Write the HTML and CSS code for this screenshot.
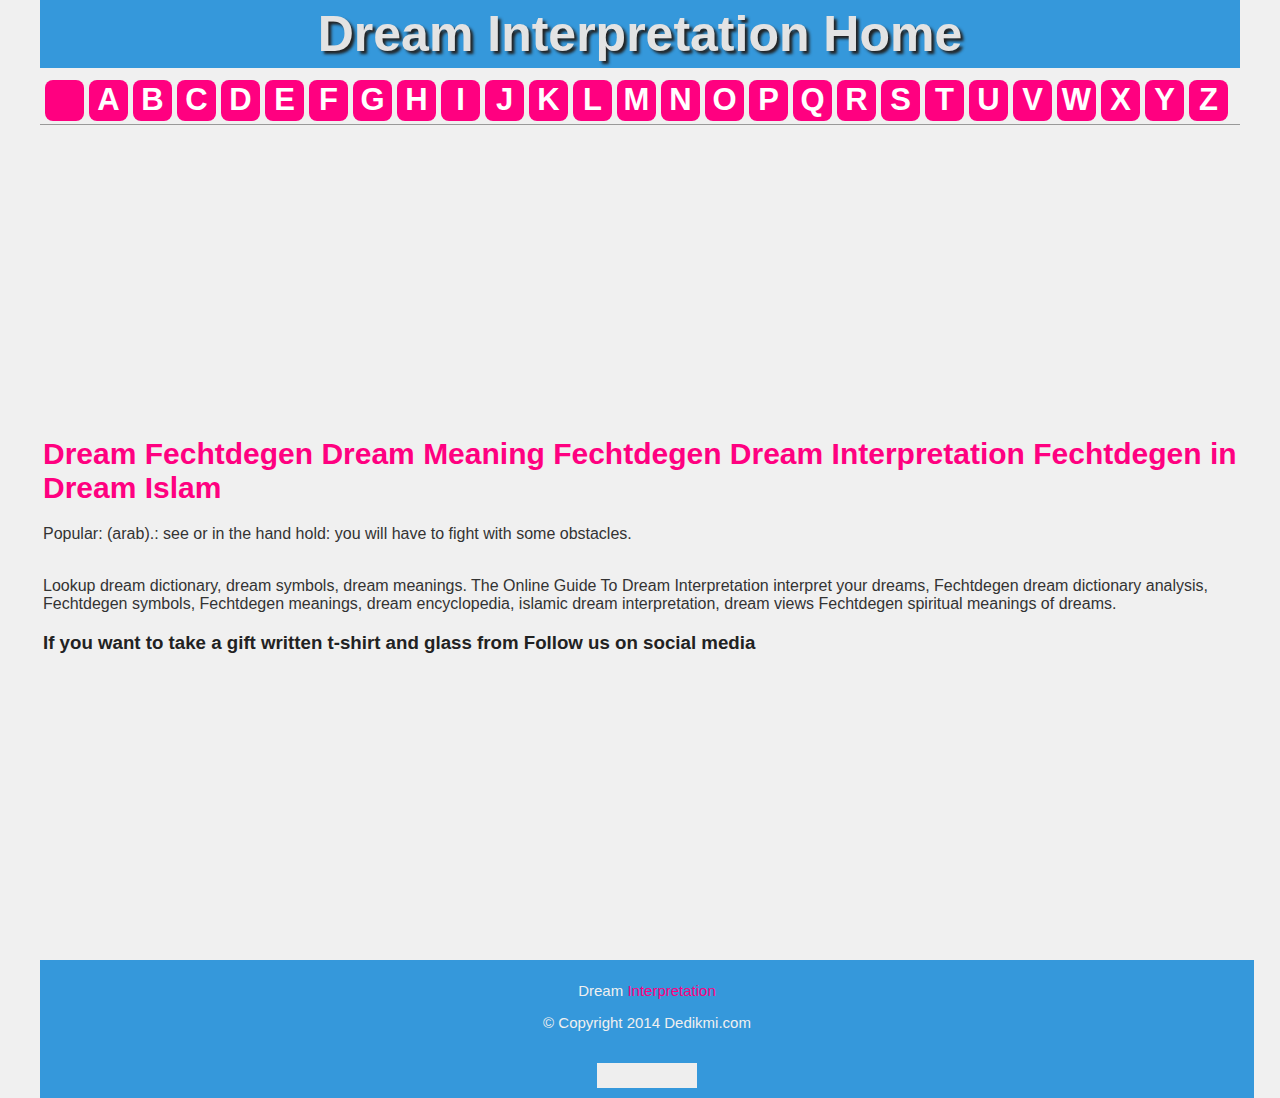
FILE: index.html
```html
<!DOCTYPE html>
<html>
<head>
<meta charset="utf-8">
<title>Dream Fechtdegen</title>
<link rel="stylesheet" href="styles.css">
</head>
<body>
<div class="page">
  <header class="top">
    <h1 class="site-title">Dream Interpretation Home</h1>
  </header>
  <nav class="letters">
    <a class="letter" href="#"></a>
    <a class="letter" href="#">A</a><a class="letter" href="#">B</a><a class="letter" href="#">C</a><a class="letter" href="#">D</a><a class="letter" href="#">E</a><a class="letter" href="#">F</a><a class="letter" href="#">G</a><a class="letter" href="#">H</a><a class="letter" href="#">I</a><a class="letter" href="#">J</a><a class="letter" href="#">K</a><a class="letter" href="#">L</a><a class="letter" href="#">M</a><a class="letter" href="#">N</a><a class="letter" href="#">O</a><a class="letter" href="#">P</a><a class="letter" href="#">Q</a><a class="letter" href="#">R</a><a class="letter" href="#">S</a><a class="letter" href="#">T</a><a class="letter" href="#">U</a><a class="letter" href="#">V</a><a class="letter" href="#">W</a><a class="letter" href="#">X</a><a class="letter" href="#">Y</a><a class="letter" href="#">Z</a>
  </nav>
  <div class="ad-top"></div>
  <main class="content">
    <h2 class="headline">Dream Fechtdegen Dream Meaning Fechtdegen Dream Interpretation Fechtdegen in Dream Islam</h2>
    <p class="popular">Popular: (arab).: see or in the hand hold: you will have to fight with some obstacles.</p>
    <p class="lookup">Lookup dream dictionary, dream symbols, dream meanings. The Online Guide To Dream Interpretation interpret your dreams, Fechtdegen dream dictionary analysis, Fechtdegen symbols, Fechtdegen meanings, dream encyclopedia, islamic dream interpretation, dream views Fechtdegen spiritual meanings of dreams.</p>
    <h3 class="gift">If you want to take a gift written t-shirt and glass from Follow us on social media</h3>
  </main>
  <div class="ad-bottom"></div>
  <footer class="foot">
    <p class="foot-brand">Dream <span class="pink">Interpretation</span></p>
    <p class="foot-copy">© Copyright 2014 Dedikmi.com</p>
    <div class="foot-box"></div>
  </footer>
</div>
</body>
</html>
```

FILE: styles.css
```css
html, body {
  margin: 0;
  padding: 0;
  background: #f0f0f0;
  font-family: "Liberation Sans", Arial, sans-serif;
}
.page {
  width: 1200px;
  margin: 0 0 0 40px;
}
.top {
  background: #3598db;
  height: 68px;
  display: flex;
  align-items: center;
  justify-content: center;
}
.site-title {
  margin: 0;
  font-size: 50px;
  font-weight: bold;
  color: #e3e3e3;
  text-shadow: 3px 3px 3px #222;
  line-height: 68px;
}
.letters {
  display: flex;
  gap: 5px;
  padding: 12px 0 3px 5px;
  border-bottom: 1px solid #999;
}
.letter {
  width: 39px;
  height: 41px;
  border-radius: 8px;
  background: #ff0080;
  color: #fff;
  font-weight: bold;
  font-size: 31px;
  line-height: 39px;
  text-align: center;
  text-decoration: none;
}
.ad-top {
  height: 312px;
}
.content {
  padding: 0 3px;
}
.headline {
  margin: 0;
  color: #ff0080;
  font-size: 30px;
  line-height: 34px;
  font-weight: bold;
}
.popular {
  margin: 20px 0 0;
  font-size: 16px;
  line-height: 18px;
  color: #333;
}
.lookup {
  margin: 34px 0 0;
  font-size: 16px;
  line-height: 18px;
  color: #333;
}
.gift {
  margin: 19px 0 0;
  font-size: 18.7px;
  line-height: 22px;
  color: #222;
  font-weight: bold;
}
.ad-bottom {
  height: 306px;
}
.foot {
  width: 1214px;
  background: #3598db;
  padding: 22px 0 10px;
  text-align: center;
  color: #f0f0f0;
  font-size: 15px;
  height: 120px;
}
.foot-brand {
  margin: 0;
  line-height: 18px;
}
.pink {
  color: #ff0080;
}
.foot-copy {
  margin: 14px 0 0;
  line-height: 18px;
}
.foot-box {
  width: 100px;
  height: 25px;
  background: #eee;
  margin: 31px auto 0;
}
```
